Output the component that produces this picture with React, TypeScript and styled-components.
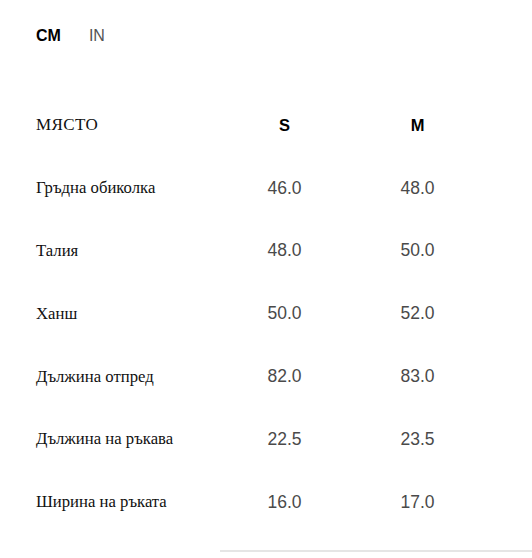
import styled, { createGlobalStyle } from "styled-components";

const GlobalStyle = createGlobalStyle`
  body {
    margin: 0;
    background: #fff;
  }
`;

const Page = styled.div`
  width: 532px;
  height: 558px;
  position: relative;
  overflow: hidden;
`;

const UnitSwitch = styled.div`
  display: flex;
  gap: 28px;
  padding: 15px 0 0 36px;
  height: 56px;
  box-sizing: border-box;
`;

const Unit = styled.button<{ $active?: boolean }>`
  border: none;
  background: none;
  padding: 0;
  cursor: pointer;
  font-family: "Liberation Sans", Arial, sans-serif;
  font-size: 16px;
  font-weight: ${(p) => (p.$active ? 700 : 400)};
  color: ${(p) => (p.$active ? "#000" : "#555")};
`;

const Table = styled.div`
  display: grid;
  grid-template-columns: 182px 133px 133px;
  padding: 38px 0 0 36px;
  grid-auto-rows: 62.8px;
`;

const Label = styled.div<{ $head?: boolean }>`
  font-family: "Liberation Serif", "Times New Roman", serif;
  font-size: ${(p) => (p.$head ? "17px" : "16.7px")};
  color: #111;
  display: flex;
  align-items: center;
  letter-spacing: ${(p) => (p.$head ? "0.4px" : "0")};
`;

const Cell = styled.div<{ $head?: boolean }>`
  font-family: "Liberation Sans", Arial, sans-serif;
  font-size: ${(p) => (p.$head ? "16.5px" : "17.5px")};
  font-weight: ${(p) => (p.$head ? 700 : 400)};
  color: ${(p) => (p.$head ? "#000" : "#4a4a4a")};
  display: flex;
  align-items: center;
  justify-content: center;
`;

const BottomLine = styled.div`
  position: absolute;
  left: 220px;
  right: 0;
  top: 550px;
  height: 2px;
  background: #e5e5e5;
`;

const rows: [string, string, string][] = [
  ["Гръдна обиколка", "46.0", "48.0"],
  ["Талия", "48.0", "50.0"],
  ["Ханш", "50.0", "52.0"],
  ["Дължина отпред", "82.0", "83.0"],
  ["Дължина на ръкава", "22.5", "23.5"],
  ["Ширина на ръката", "16.0", "17.0"],
];

export default function App() {
  return (
    <Page>
      <GlobalStyle />
      <UnitSwitch>
        <Unit $active>CM</Unit>
        <Unit>IN</Unit>
      </UnitSwitch>
      <Table>
        <Label $head>МЯСТО</Label>
        <Cell $head>S</Cell>
        <Cell $head>M</Cell>
        {rows.map(([name, s, m]) => (
          <>
            <Label key={name}>{name}</Label>
            <Cell>{s}</Cell>
            <Cell>{m}</Cell>
          </>
        ))}
      </Table>
      <BottomLine />
    </Page>
  );
}
